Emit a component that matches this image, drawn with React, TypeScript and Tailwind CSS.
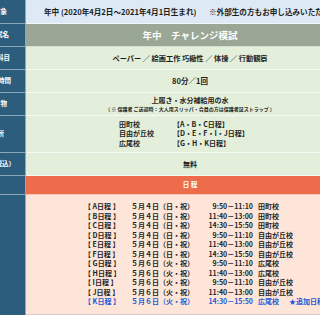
import React from 'react'

const labelCell =
  'flex w-[26px] shrink-0 items-center justify-end overflow-hidden whitespace-nowrap border-r border-b border-[#8ea7b9] bg-[#2c5d7d] text-[6.5px] font-bold text-white'

const schedule = [
  ['A', '５月４日（日・祝）', '9:50', '11:10', '田町校'],
  ['B', '５月４日（日・祝）', '11:40', '13:00', '田町校'],
  ['C', '５月４日（日・祝）', '14:30', '15:50', '田町校'],
  ['D', '５月４日（日・祝）', '9:50', '11:10', '自由が丘校'],
  ['E', '５月４日（日・祝）', '11:40', '13:00', '自由が丘校'],
  ['F', '５月４日（日・祝）', '14:30', '15:50', '自由が丘校'],
  ['G', '５月６日（火・祝）', '9:50', '11:10', '広尾校'],
  ['H', '５月６日（火・祝）', '11:40', '13:00', '広尾校'],
  ['I', '５月６日（火・祝）', '9:50', '11:10', '自由が丘校'],
  ['J', '５月６日（火・祝）', '11:40', '13:00', '自由が丘校'],
  ['K', '５月６日（火・祝）', '14:30', '15:50', '広尾校'],
]

function Row({
  label,
  pr,
  h,
  cell,
  children,
}: {
  label: string
  pr: string
  h: string
  cell: string
  children: React.ReactNode
}) {
  return (
    <div className={`flex ${h}`}>
      <div className={labelCell}>
        <span className={pr}>{label}</span>
      </div>
      <div className={`flex min-w-0 flex-1 flex-col justify-center border-b ${cell}`}>{children}</div>
    </div>
  )
}

export default function App() {
  return (
    <div className="h-[320px] w-[320px] overflow-hidden bg-white font-['Noto_Sans_CJK_JP','Liberation_Sans',sans-serif] font-bold text-[#1e1e1e]">
      <div className="flex w-[354px] flex-col">
        <Row label="対象" pr="pr-[18px]" h="h-[24px]" cell="border-white/60 bg-[#dde9f5]">
          <div className="flex whitespace-nowrap pl-[18px] text-[7.6px]">
            <span className="w-[165px] shrink-0">年中 (2020年4月2日～2021年4月1日生まれ)</span>
            <span>※外部生の方もお申し込みいただけます</span>
          </div>
        </Row>
        <Row label="模試名" pr="pr-[16px]" h="h-[23px]" cell="border-white/60 bg-[#9ba796]">
          <div className="text-center text-[9.5px] text-white">年中　チャレンジ模試</div>
        </Row>
        <Row label="受験科目" pr="pr-[15px]" h="h-[23px]" cell="border-white/60 bg-[#e3efdb]">
          <div className="text-center text-[7.2px]">ペーパー ／ 絵画工作 巧緻性 ／ 体操 ／ 行動観察</div>
        </Row>
        <Row label="試験時間" pr="pr-[14px]" h="h-[23px]" cell="border-white/60 bg-[#e3efdb]">
          <div className="text-center text-[7.5px]">80分／1回</div>
        </Row>
        <Row label="持ち物" pr="pr-[18px]" h="h-[23px]" cell="border-white/60 bg-[#e3efdb]">
          <div className="text-center text-[7px] leading-[9px]">上履き・水分補給用の水</div>
          <div className="text-center text-[5px] leading-[7px]">
            〔 ※ 保護者 ご送迎時：大人用スリッパ・会員の方は保護者証ストラップ 〕
          </div>
        </Row>
        <Row label="場所" pr="pr-[21px]" h="h-[37px]" cell="border-white/60 bg-[#e3efdb]">
          <div className="flex pl-[93px] text-[7px] leading-[9.6px]">
            <div className="flex w-[54px] flex-col">
              <span>田町校</span>
              <span>自由が丘校</span>
              <span>広尾校</span>
            </div>
            <div className="flex flex-col">
              <span>【A・B・C日程】</span>
              <span>【D・E・F・I・J日程】</span>
              <span>【G・H・K日程】</span>
            </div>
          </div>
        </Row>
        <Row label="受験料（税込）" pr="pr-[10px]" h="h-[23px]" cell="border-white/60 bg-[#e3efdb]">
          <div className="text-center text-[7px]">無料</div>
        </Row>
        <Row label="" pr="" h="h-[19px]" cell="border-white/60 bg-[#ec6c4c]">
          <div className="text-center text-[6.5px] text-white">日 程</div>
        </Row>
        <div className="flex h-[120px]">
          <div className="w-[26px] shrink-0 border-r border-[#8ea7b9] bg-[#2c5d7d]" />
          <div className="flex flex-1 flex-col border-b border-[#d8cfc8] bg-[#fde6d9] pt-[7px] text-[7px] leading-[9.5px]">
            {schedule.map(([k, date, from, to, place]) => (
              <div
                key={k}
                className={`flex whitespace-nowrap pl-[58px] ${k === 'K' ? 'text-[#1f56d8]' : ''}`}
              >
                <span className="w-[47px]">【 {k}日程 】</span>
                <span className="w-[70px]">{date}</span>
                <span className="w-[52px] text-right">
                  {from}－{to}
                </span>
                <span className="ml-[5px]">{place}</span>
                {k === 'K' && <span className="ml-[10px]">★追加日程</span>}
              </div>
            ))}
          </div>
        </div>
      </div>
    </div>
  )
}
